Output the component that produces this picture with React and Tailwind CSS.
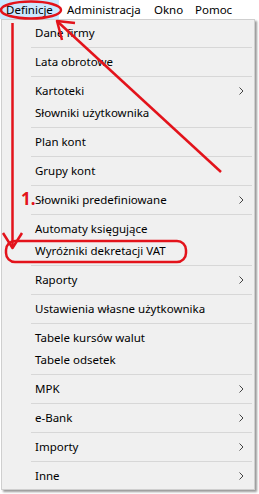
const menuBar = [
  ["Definicje", "w-[59px] pl-[6px] bg-[#cce8ff]"],
  ["Administracja", "w-[87px] pl-[8px]"],
  ["Okno", "w-[43px] pl-[8px]"],
  ["Pomoc", "w-[50px] pl-[6px]"],
];

// null = separator, [label, hasSubmenu]
const items = [
  ["Dane firmy"],
  null,
  ["Lata obrotowe"],
  null,
  ["Kartoteki", true],
  ["Słowniki użytkownika"],
  null,
  ["Plan kont"],
  null,
  ["Grupy kont"],
  null,
  ["Słowniki predefiniowane", true],
  null,
  ["Automaty księgujące"],
  ["Wyróżniki dekretacji VAT"],
  null,
  ["Raporty", true],
  null,
  ["Ustawienia własne użytkownika"],
  null,
  ["Tabele kursów walut"],
  ["Tabele odsetek"],
  null,
  ["MPK", true],
  null,
  ["e-Bank", true],
  null,
  ["Importy", true],
  null,
  ["Inne", true],
];

function Chevron() {
  return (
    <svg width="5" height="8" viewBox="0 0 5 8" className="mr-[10px]">
      <polyline points="0.5,0.5 4,4 0.5,7.5" fill="none" stroke="#444" strokeWidth="1" />
    </svg>
  );
}

function MenuItem({ label, sub }) {
  return (
    <div className="flex h-[22px] items-center justify-between pl-[33px] text-[11.5px] text-black">
      <span>{label}</span>
      {sub && <Chevron />}
    </div>
  );
}

function Annotations() {
  const red = "#e3131b";
  return (
    <svg className="pointer-events-none absolute left-0 top-0" width="259" height="494">
      <ellipse cx="31" cy="10" rx="30" ry="8.5" fill="none" stroke={red} strokeWidth="2.5" />
      <line x1="221" y1="172" x2="58" y2="22" stroke={red} strokeWidth="2.5" />
      <polyline points="62,40 57,21 75,23" fill="none" stroke={red} strokeWidth="2.5" strokeLinejoin="round" />
      <line x1="12.5" y1="23" x2="12.5" y2="247" stroke={red} strokeWidth="2.5" />
      <polyline points="3,233 12.5,248 22,233" fill="none" stroke={red} strokeWidth="2.5" strokeLinejoin="round" />
      <rect x="6" y="241" width="180" height="21" rx="9" fill="none" stroke={red} strokeWidth="2.5" />
    </svg>
  );
}

export default function App() {
  return (
    <div className="relative h-[494px] w-[259px] overflow-hidden bg-white font-['Noto_Sans',sans-serif]">
      <div className="flex h-[19px] items-center text-[11.5px] text-black">
        {menuBar.map(([name, cls]) => (
          <div key={name} className={`flex h-full shrink-0 items-center ${cls}`}>
            {name}
          </div>
        ))}
      </div>
      <div className="ml-px w-[254px] border border-[#cfcfcf] bg-[#f0f0f0] py-[2px] shadow-[2px_2px_2px_rgba(0,0,0,0.4)]">
        {items.map((item, i) =>
          item ? (
            <MenuItem key={i} label={item[0]} sub={item[1]} />
          ) : (
            <div key={i} className="flex h-[7px] items-center pl-[29px] pr-[2px]">
              <div className="h-px w-full bg-[#d7d7d7]" />
            </div>
          )
        )}
      </div>
      <span className="absolute left-[21px] top-[190px] text-[17px] font-bold leading-none text-[#e3131b]">
        1.
      </span>
      <Annotations />
    </div>
  );
}
